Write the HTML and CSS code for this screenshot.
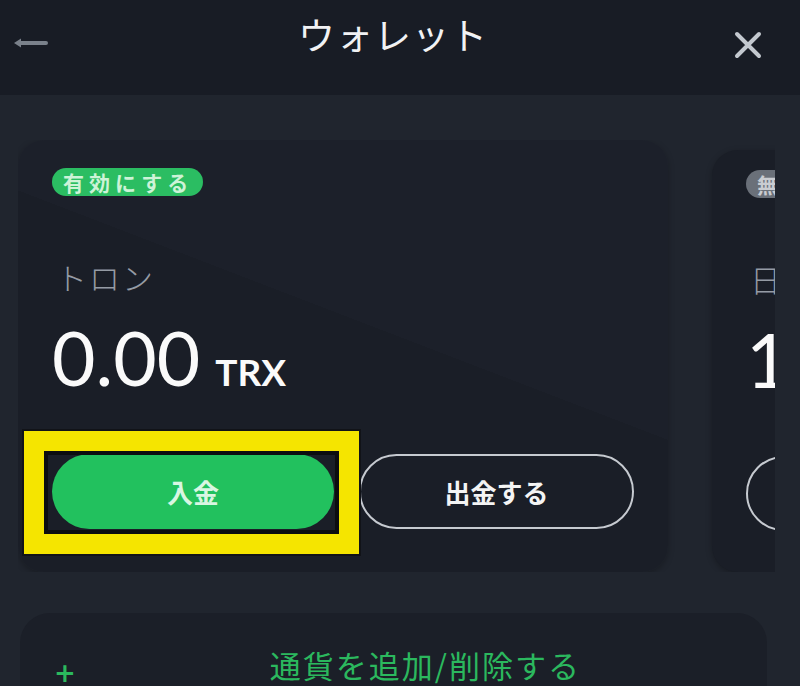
FILE: index.html
```html
<!DOCTYPE html>
<html lang="ja">
<head>
  <meta charset="UTF-8">
  <title>ウォレット</title>
  <link rel="stylesheet" href="styles.css">
</head>
<body>

  <header class="topbar">
    <button class="icon-btn back" aria-label="戻る">
      <svg width="36" height="12" viewBox="0 0 36 12">
        <path d="M2 6 L9 1.5 L9 10.5 Z" fill="#7a818b"/>
        <line x1="8" y1="6" x2="34" y2="6" stroke="#7a818b" stroke-width="4" stroke-linecap="round"/>
      </svg>
    </button>
    <h1>ウォレット</h1>
    <button class="icon-btn close" aria-label="閉じる">
      <svg width="28" height="28" viewBox="0 0 28 28">
        <path d="M3 3 L25 25 M25 3 L3 25" stroke="#c3c8cf" stroke-width="4" stroke-linecap="round"/>
      </svg>
    </button>
  </header>

  <main class="content">
    <div class="carousel">
      <section class="card current">
        <span class="badge on">有効にする</span>
        <div class="coin-name">トロン</div>
        <div class="amount">0.00<span class="unit">TRX</span></div>
        <div class="actions">
          <div class="highlight">
            <button class="btn deposit">入金</button>
          </div>
          <button class="btn withdraw">出金する</button>
        </div>
      </section>

      <section class="card next">
        <span class="badge off">無効にする</span>
        <div class="coin-name">日本円</div>
        <div class="amount">1,000<span class="unit">JPY</span></div>
        <div class="actions">
          <button class="btn withdraw">入金</button>
        </div>
      </section>
    </div>

    <div class="add-card">
      <span class="plus">+</span>
      <span class="add-label">通貨を追加/削除する</span>
    </div>
  </main>

</body>
</html>
```

FILE: styles.css
```css
html, body {
  margin: 0;
  height: 100%;
  overflow: hidden;
}

body {
  background: #20252e;
  color: #eee;
  font-family: "Noto Sans CJK JP", "Noto Sans", sans-serif;
}

.topbar {
  height: 95px;
  background: #181c25;
  display: flex;
  align-items: center;
  justify-content: space-between;
  padding: 0 38px 0 12px;
  box-sizing: border-box;
  position: relative;
}

.topbar h1 {
  position: absolute;
  left: 0;
  right: 14px;
  top: 7px;
  margin: 0;
  text-align: center;
  font-size: 37px;
  font-weight: 400;
  color: #f1f2f4;
  letter-spacing: 1px;
}

.icon-btn {
  background: none;
  border: none;
  padding: 0;
  display: flex;
}

.icon-btn.back {
  margin-top: -10px;
}

.icon-btn.close {
  margin-top: -6px;
}

.content {
  padding-top: 45px;
}

.carousel {
  display: flex;
  gap: 44px;
  margin-left: 18px;
  width: 757px;
  overflow: hidden;
}

.card {
  flex: 0 0 650px;
  box-sizing: border-box;
  height: 432px;
  padding: 28px 34px 0;
  border-radius: 26px;
  background: linear-gradient(21deg, #1a1e27 56%, #1c202a 56%);
  box-shadow: 0 2px 6px rgba(0, 0, 0, 0.25);
}

.card.next {
  margin-top: 10px;
  height: 422px;
  padding-top: 20px;
  background: #1a1e27;
}

.badge {
  display: inline-block;
  height: 28px;
  line-height: 28px;
  padding: 0 10px 0 11px;
  border-radius: 14px;
  font-size: 21px;
  font-weight: 700;
  letter-spacing: 5px;
}

.badge.on {
  background: #2bbd62;
  color: #cdf3d7;
}

.badge.off {
  background: #6a7079;
  color: #c9ccd1;
}

.coin-name {
  margin-top: 62px;
  padding-left: 4px;
  font-size: 31px;
  line-height: 37px;
  font-weight: 300;
  color: #959ba4;
  letter-spacing: 2px;
}

.amount {
  margin-top: 25px;
  font-family: Lato, "Open Sans", sans-serif;
  font-size: 75px;
  line-height: 75px;
  color: #fafafa;
}

.unit {
  margin-left: 15px;
  font-size: 37px;
  font-weight: 700;
}

.actions {
  display: flex;
  gap: 25px;
  margin-top: 45px;
}

.btn {
  height: 75px;
  border-radius: 38px;
  font-family: "Noto Sans CJK JP", sans-serif;
  font-size: 26px;
  font-weight: 700;
  cursor: pointer;
}

.deposit {
  width: 282px;
  border: none;
  background: #22c15e;
  color: #d9f6e2;
  display: block;
}

.withdraw {
  width: 275px;
  border: 2px solid #c6cad0;
  background: transparent;
  color: #f4f4f4;
}

.highlight {
  position: relative;
}

.highlight::after {
  content: "";
  position: absolute;
  left: -28px;
  top: -23px;
  right: -25px;
  bottom: -25px;
  border: 20px solid #f5e500;
  box-shadow: inset 0 0 0 4px #0c0d10, 0 0 0 2px #111318;
  pointer-events: none;
}

.add-card {
  margin: 41px 33px 0 20px;
  height: 120px;
  border-radius: 30px;
  background: #1b1f28;
  display: flex;
  align-items: flex-start;
  padding: 29px 0 0 34px;
  box-sizing: border-box;
  color: #2bb85e;
}

.plus {
  font-family: "DejaVu Sans", sans-serif;
  font-size: 26px;
  font-weight: 700;
  line-height: 50px;
  margin-top: 6px;
}

.add-label {
  margin-left: 194px;
  font-size: 31px;
  line-height: 46px;
  letter-spacing: 2px;
}
```
